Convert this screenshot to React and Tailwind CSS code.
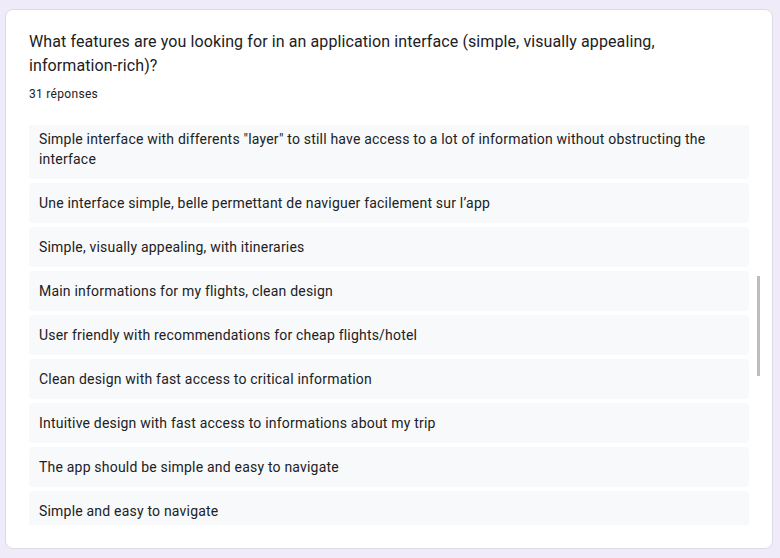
import React from 'react';

const answers = [
    'Simple interface with differents "layer" to still have access to a lot of information without obstructing the interface',
    'Une interface simple, belle permettant de naviguer facilement sur l\u2019app',
    'Simple, visually appealing, with itineraries',
    'Main informations for my flights, clean design',
    'User friendly with recommendations for cheap flights/hotel',
    'Clean design with fast access to critical information',
    'Intuitive design with fast access to informations about my trip',
    'The app should be simple and easy to navigate',
    'Simple and easy to navigate',
];

const App = () => {
    return (
        <div className="w-[780px] h-[558px] bg-[#f0ebf8] pl-[5px] pt-[9px] overflow-hidden" style={{ fontFamily: 'Roboto, "Liberation Sans", sans-serif' }}>
            <div className="w-[768px] h-[540px] bg-white border border-[#dadce0] rounded-lg pl-[23px] pt-5 text-[#202124]">
                <h2 className="text-base leading-6 tracking-[0.1px] w-[700px]">
                    What features are you looking for in an application interface (simple, visually appealing, information-rich)?
                </h2>
                <p className="text-xs leading-4 tracking-[0.3px] mt-2">31 réponses</p>

                {/* answers list, scrolled down a few px */}
                <div className="relative mt-[23px] h-[400px] w-[733px] overflow-hidden">
                    <div className="-mt-[6px] flex flex-col gap-1 w-[720px]">
                        {answers.map((a, i) => (
                            <div key={i} className="bg-[#f8f9fa] rounded px-[10px] py-[10px] text-sm leading-5 tracking-[0.2px]">
                                {a}
                            </div>
                        ))}
                    </div>
                    <div className="absolute right-[2px] top-[151px] w-[3px] h-[100px] bg-[#bdbdbd]" />
                </div>
            </div>
        </div>
    );
};

export default App;
